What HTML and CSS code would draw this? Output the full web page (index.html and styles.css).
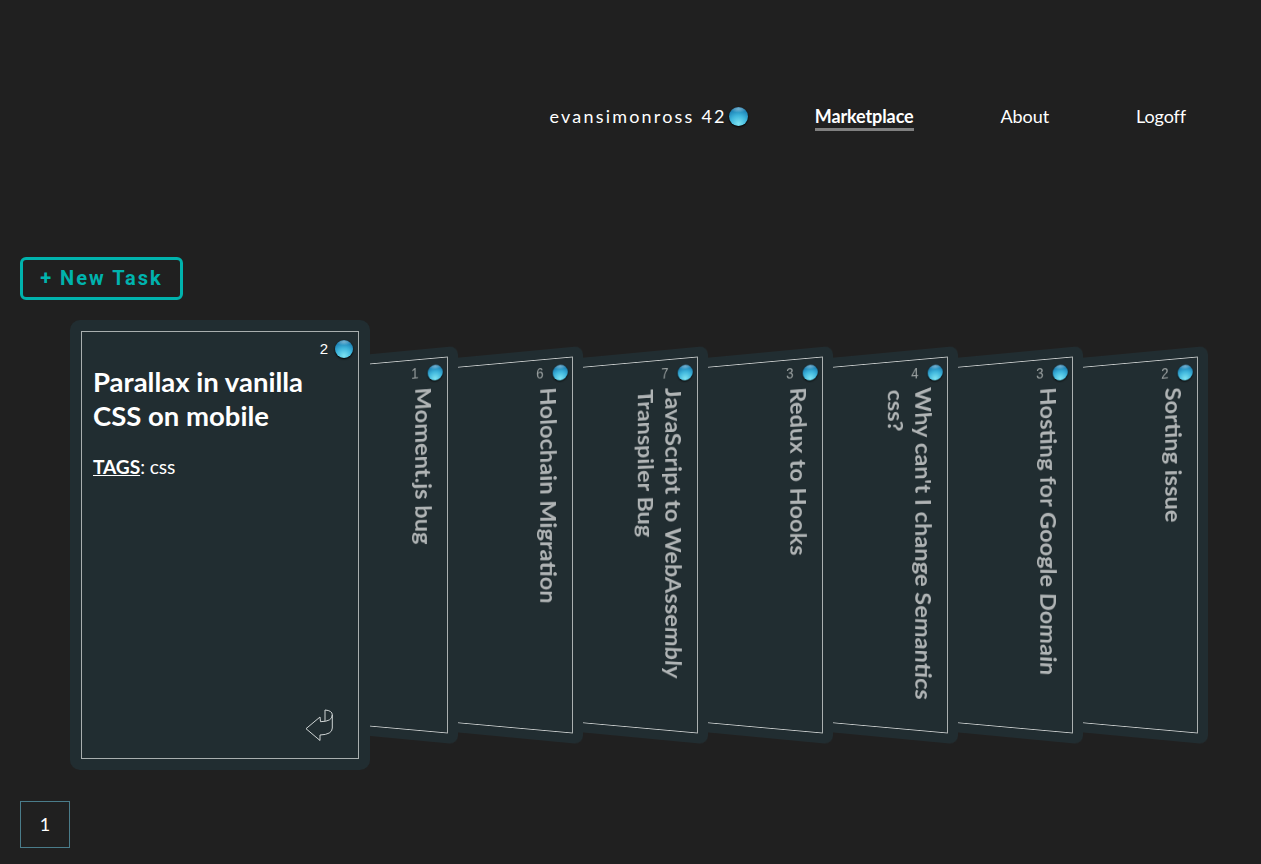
FILE: index.html
```html
<!DOCTYPE html>
<html lang="en">
<head>
    <meta charset="UTF-8">
    <meta name="viewport" content="width=device-width, initial-scale=1.0">
    <title>Marketplace</title>
    <link rel="stylesheet" href="styles.css">
</head>
<body>

<header class="topbar">
    <div class="user">
        <span class="user-name">evansimonross 42</span>
        <span class="coin coin-large"></span>
    </div>
    <nav class="nav">
        <a class="nav-link active" href="#">Marketplace</a>
        <a class="nav-link" href="#">About</a>
        <a class="nav-link" href="#">Logoff</a>
    </nav>
</header>

<button class="new-task">+ New Task</button>

<section class="deck">
    <article class="card card-open">
        <div class="card-inner">
            <div class="bounty"><span>2</span><span class="coin"></span></div>
            <h2 class="card-title">Parallax in vanilla CSS on mobile</h2>
            <p class="tags"><u>TAGS</u>: css</p>
            <svg class="flip-icon" viewBox="0 0 30 34" width="30" height="34" fill="none" stroke="#cfd4d4" stroke-width="1">
                <path d="M2 20.7 L16 9 L16.5 13.7 Q28.3 13.5 28.3 7 V20 Q28.3 26.5 16 27 V32.5 Z"/>
                <path d="M21 2 V13.2 M21 2 Q28.3 2.5 28.3 7"/>
            </svg>
        </div>
    </article>
    <article class="card card-side">
        <div class="card-inner">
            <div class="bounty"><span>1</span><span class="coin"></span></div>
            <h2 class="card-title">Moment.js bug</h2>
        </div>
    </article>
    <article class="card card-side">
        <div class="card-inner">
            <div class="bounty"><span>6</span><span class="coin"></span></div>
            <h2 class="card-title">Holochain Migration</h2>
        </div>
    </article>
    <article class="card card-side">
        <div class="card-inner">
            <div class="bounty"><span>7</span><span class="coin"></span></div>
            <h2 class="card-title">JavaScript to WebAssembly Transpiler Bug</h2>
        </div>
    </article>
    <article class="card card-side">
        <div class="card-inner">
            <div class="bounty"><span>3</span><span class="coin"></span></div>
            <h2 class="card-title">Redux to Hooks</h2>
        </div>
    </article>
    <article class="card card-side">
        <div class="card-inner">
            <div class="bounty"><span>4</span><span class="coin"></span></div>
            <h2 class="card-title">Why can't I change Semantics css?</h2>
        </div>
    </article>
    <article class="card card-side">
        <div class="card-inner">
            <div class="bounty"><span>3</span><span class="coin"></span></div>
            <h2 class="card-title">Hosting for Google Domain</h2>
        </div>
    </article>
    <article class="card card-side">
        <div class="card-inner">
            <div class="bounty"><span>2</span><span class="coin"></span></div>
            <h2 class="card-title">Sorting issue</h2>
        </div>
    </article>
</section>

<div class="pagination">
    <a class="page" href="#">1</a>
</div>

</body>
</html>
```

FILE: styles.css
```css
* {
    box-sizing: border-box;
}
html, body {
    height: 100%;
}
body {
    margin: 0;
    overflow: hidden;
    background-color: #202020;
    color: white;
    font-family: "Lato", Arial, sans-serif;
}
.topbar {
    display: flex;
    justify-content: flex-end;
    align-items: center;
    height: 257px;
    padding: 0 75px 22px 0;
}
.user {
    display: flex;
    align-items: center;
    gap: 2px;
    margin: 0 67px 3px 0;
}
.user-name {
    font-size: 18px;
    letter-spacing: 2.2px;
}
.nav {
    display: flex;
    gap: 87px;
}
.nav-link {
    color: white;
    text-decoration: none;
    font-size: 18px;
    line-height: 24px;
    letter-spacing: -0.1px;
    border-bottom: 3px solid transparent;
}
.nav-link.active {
    font-weight: bold;
    border-bottom-color: #808080;
}
.coin {
    display: block;
    flex: none;
    width: 18px;
    height: 18px;
    border-radius: 50%;
    background:
        radial-gradient(ellipse 45% 20% at 50% 10%, rgba(255, 255, 255, 0.4), transparent),
        radial-gradient(circle at 50% 88%, #7de3f2 0%, #3fb6dc 42%, #1f86b8 72%, #12608f 100%);
    box-shadow: 0 1px 2px #000;
}
.coin-large {
    width: 19px;
    height: 19px;
}
.new-task {
    display: block;
    width: 163px;
    height: 43px;
    margin-left: 20px;
    padding: 0 0 2px;
    background: transparent;
    border: 3px solid #00b3ad;
    border-radius: 6px;
    color: #00b3ad;
    font-family: "Roboto", Arial, sans-serif;
    font-size: 20px;
    font-weight: bold;
    letter-spacing: 2px;
    cursor: pointer;
}
.deck {
    display: flex;
    margin: 20px 0 0 70px;
}
.card {
    flex: none;
    width: 300px;
    height: 450px;
    padding: 11px;
    background-color: #212d31;
    border-radius: 10px;
}
.card-inner {
    display: flex;
    flex-direction: column;
    height: 100%;
    border: 1px solid #a9afaf;
}
.card-open {
    position: relative;
    z-index: 10;
}
.card-side {
    margin-left: -175px;
    padding-right: 12px;
    transform-origin: right center;
    transform: scale(0.885) perspective(640px) rotateY(-15deg);
}
.card-side .card-inner {
    border-color: #c4c8c8;
}
.card-open + .card-side {
    margin-left: -212px;
    z-index: 9;
}
.card-side:nth-child(3) { z-index: 8; }
.card-side:nth-child(4) { z-index: 7; }
.card-side:nth-child(5) { z-index: 6; }
.card-side:nth-child(6) { z-index: 5; }
.card-side:nth-child(7) { z-index: 4; }
.card-side:nth-child(8) { z-index: 3; }
.bounty {
    display: flex;
    justify-content: flex-end;
    align-items: center;
    gap: 7px;
    height: 19px;
    margin: 7px 5px 7px 0;
    font-family: "Liberation Sans", Arial, sans-serif;
    font-size: 15px;
}
.card-title {
    margin: 0;
    padding: 0 11px;
    font-size: 27.5px;
    line-height: 34px;
    font-weight: bold;
}
.tags {
    margin: 22px 0 0;
    padding: 0 11px;
    font-size: 19.2px;
    letter-spacing: -0.1px;
}
.tags u {
    font-weight: bold;
}
.flip-icon {
    margin: auto 24px 16px auto;
}
.card-side .bounty {
    gap: 11px;
    margin-top: 6px;
    font-size: 16px;
}
.card-side .bounty span:first-child {
    color: #9aa0a0;
}
.card-side .card-title {
    writing-mode: vertical-rl;
    align-self: flex-end;
    max-height: 380px;
    padding: 0 11px 0 0;
    font-size: 27.2px;
    color: #b0b4b5;
}
.pagination {
    margin: 31px 0 0 20px;
}
.page {
    display: flex;
    justify-content: center;
    align-items: center;
    width: 50px;
    height: 47px;
    padding-bottom: 2px;
    border: 1px solid #4a7c8a;
    color: white;
    text-decoration: none;
    font-size: 18px;
}
```
